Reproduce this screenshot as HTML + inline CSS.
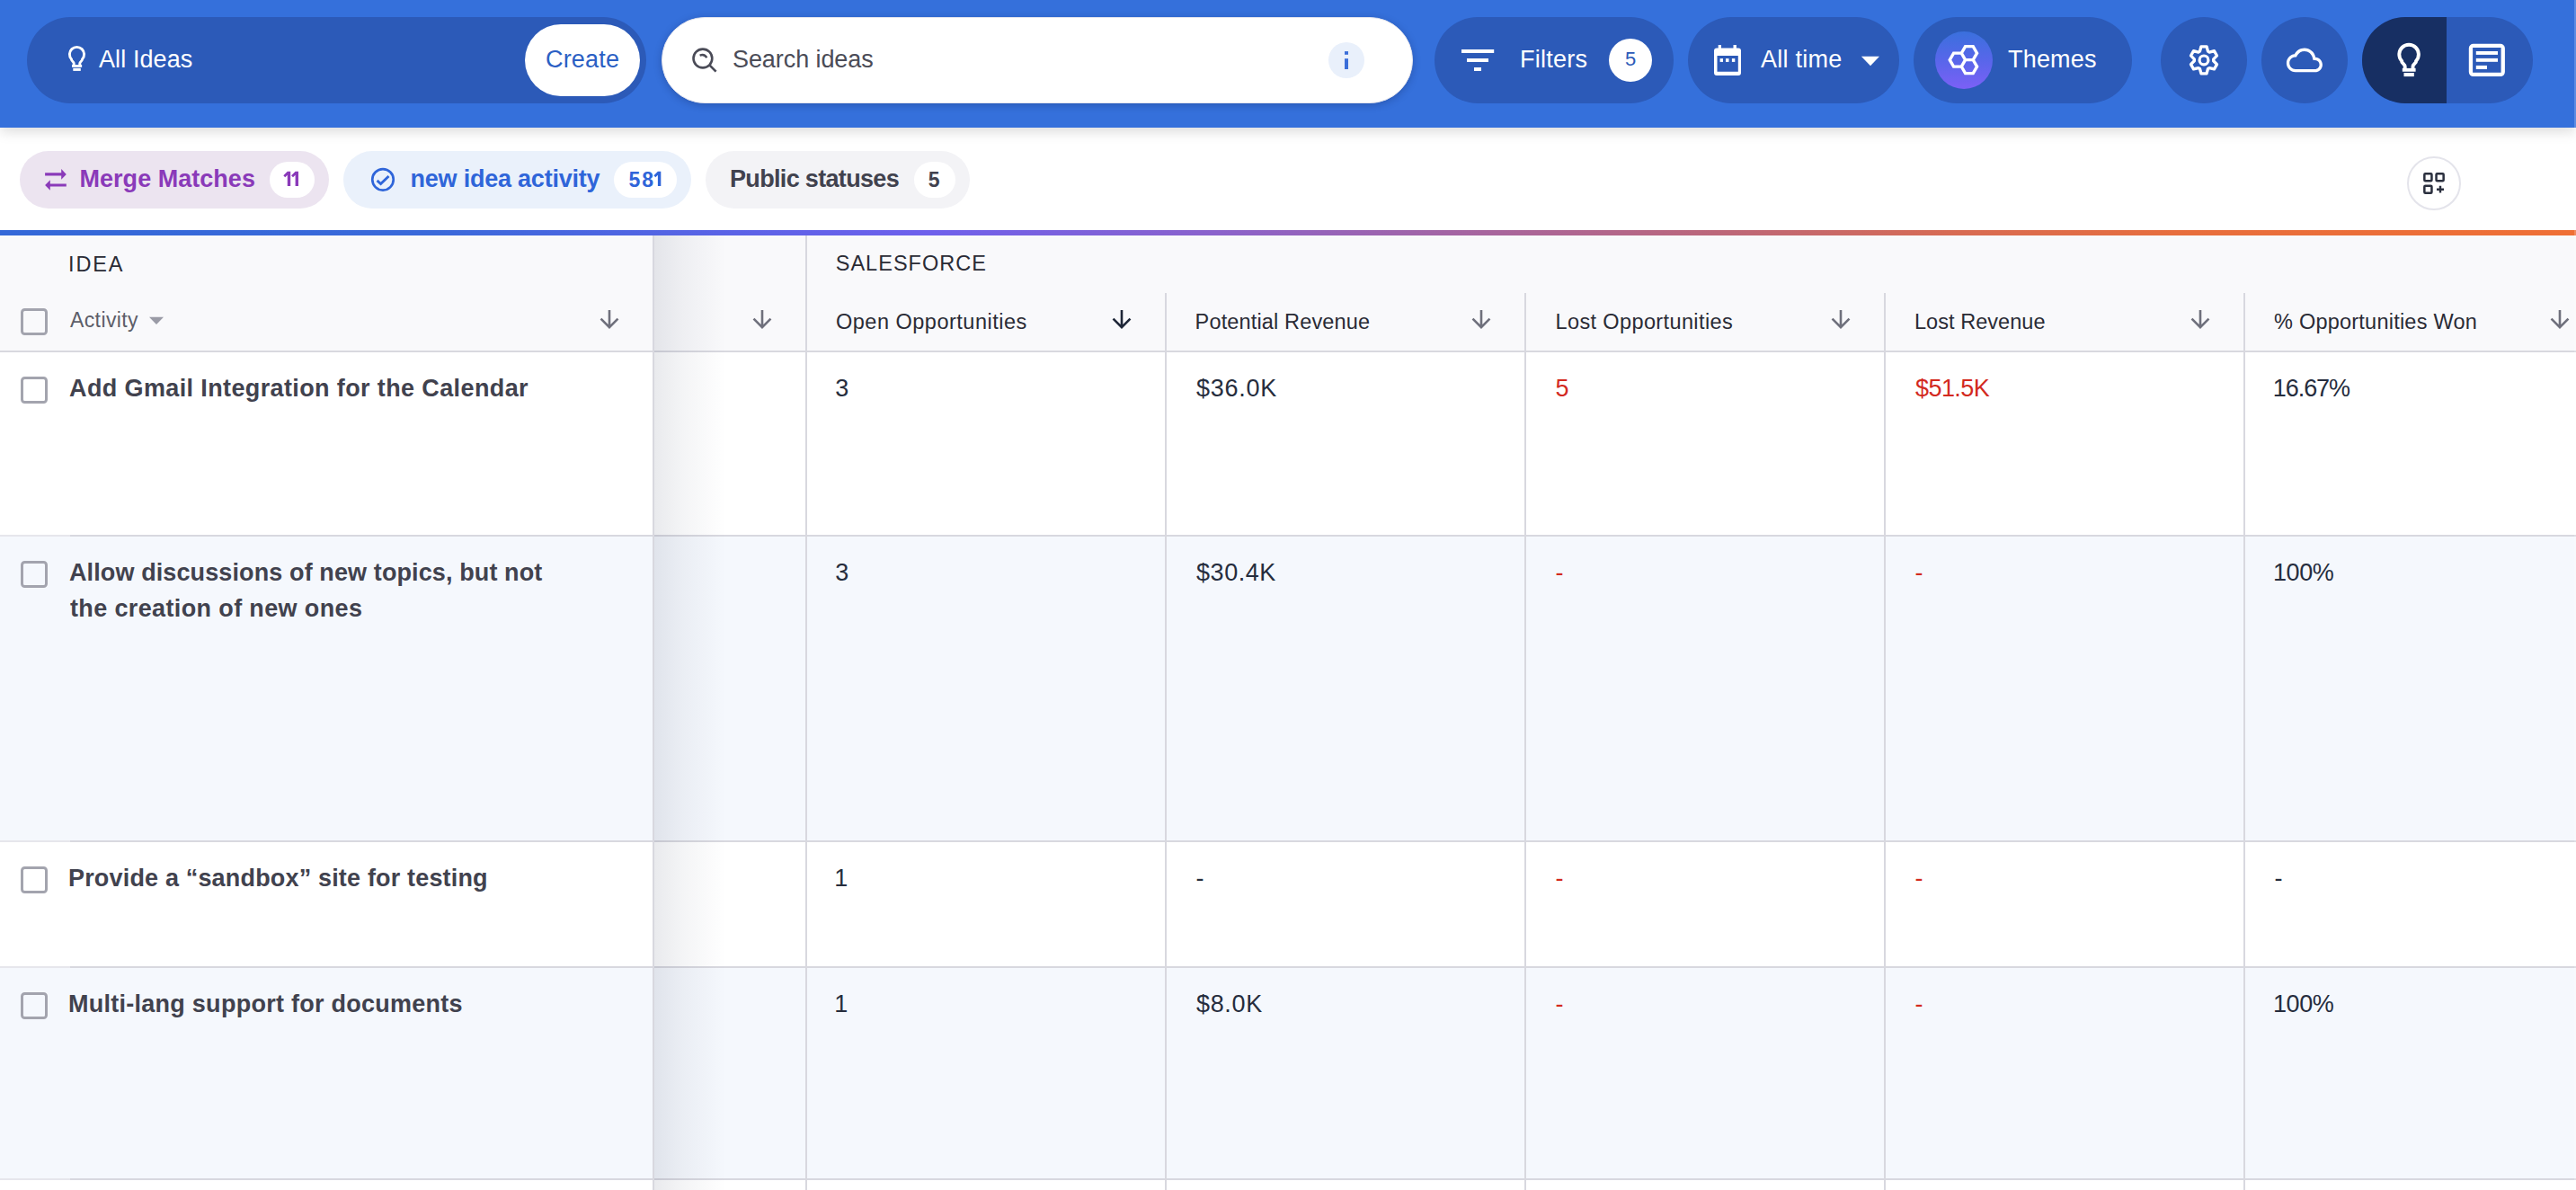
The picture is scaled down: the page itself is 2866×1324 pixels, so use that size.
<!DOCTYPE html>
<html><head><meta charset="utf-8">
<style>
*{box-sizing:border-box;margin:0;padding:0}
html,body{width:2866px;height:1324px;overflow:hidden;background:#fff;font-family:"Liberation Sans",sans-serif}
.a{position:absolute}
.t{position:absolute;white-space:nowrap;line-height:1;z-index:3}
.vl{position:absolute;width:2px;background:#d8d8df}
.cb{position:absolute;left:23px;width:30px;height:30px;border:3px solid #a3a4ae;border-radius:4.5px}
</style></head>
<body>
<div class="a" style="left:0;top:0;width:2866px;height:142px;background:#3570db;box-shadow:0 4px 14px rgba(0,0,0,.15)"></div>
<div class="a" style="left:30px;top:19px;width:689px;height:96px;border-radius:48.0px;background:#2c5ab8;"></div>
<div class="a" style="left:584px;top:27px;width:128px;height:80px;border-radius:40.0px;background:#fff;"></div>
<div class="a" style="left:736px;top:19px;width:836px;height:96px;border-radius:48.0px;background:#fff;box-shadow:0 2px 8px rgba(10,20,60,.25);border:1px solid #e6e6ee"></div>
<div class="a" style="left:1478px;top:47px;width:40px;height:40px;border-radius:20.0px;background:#e9f0fb;"></div>
<div class="a" style="left:1596px;top:19px;width:266px;height:96px;border-radius:48.0px;background:#2c5ab8;"></div>
<div class="a" style="left:1790px;top:43px;width:48px;height:48px;border-radius:24.0px;background:#fff;"></div>
<div class="a" style="left:1878px;top:19px;width:235px;height:96px;border-radius:48.0px;background:#2c5ab8;"></div>
<div class="a" style="left:2129px;top:19px;width:243px;height:96px;border-radius:48.0px;background:#2c5ab8;"></div>
<div class="a" style="left:2153px;top:35px;width:64px;height:64px;border-radius:32.0px;background:linear-gradient(180deg,#3a70dd 0%,#5866ea 50%,#7b60f6 100%);"></div>
<div class="a" style="left:2404px;top:19px;width:96px;height:96px;border-radius:48.0px;background:#2c5ab8;"></div>
<div class="a" style="left:2516px;top:19px;width:96px;height:96px;border-radius:48.0px;background:#2c5ab8;"></div>
<div class="a" style="left:2628px;top:19px;width:190px;height:96px;border-radius:48.0px;background:#2c5ab8;"></div>
<div class="a" style="left:2628px;top:19px;width:94px;height:96px;border-radius:48px 0 0 48px;background:#172f63"></div>
<div class="t" style="left:110px;top:53px;font-size:27px;color:#fff;letter-spacing:0.1px;">All Ideas</div>
<div class="t" style="left:607px;top:53px;font-size:27px;color:#2b5fc4;letter-spacing:0.18px;">Create</div>
<div class="t" style="left:815px;top:53px;font-size:27px;color:#4b4c57;letter-spacing:-0.08px;">Search ideas</div>
<div class="t" style="left:1691px;top:53px;font-size:27px;color:#fff;letter-spacing:0.23px;">Filters</div>
<div class="t" style="left:1959px;top:53px;font-size:27px;color:#fff;letter-spacing:0.25px;">All time</div>
<div class="t" style="left:2234px;top:53px;font-size:27px;color:#fff;letter-spacing:0.2px;">Themes</div>
<div class="t" style="left:1808px;top:55px;font-size:22px;color:#2c5ab8;">5</div>
<div class="a" style="left:22px;top:168px;width:344px;height:64px;border-radius:32px;background:#ece4f0"></div>
<div class="a" style="left:300px;top:180px;width:50px;height:40px;border-radius:20px;background:#fff"></div>
<div class="a" style="left:382px;top:168px;width:387px;height:64px;border-radius:32px;background:#eaf1fb"></div>
<div class="a" style="left:683px;top:180px;width:70px;height:40px;border-radius:20px;background:#fff"></div>
<div class="a" style="left:785px;top:168px;width:294px;height:64px;border-radius:32px;background:#f3f3f6"></div>
<div class="a" style="left:1017px;top:180px;width:46px;height:40px;border-radius:20px;background:#fff"></div>
<div class="t" style="left:88.5px;top:186px;font-size:27px;color:#8a3ab9;font-weight:bold;letter-spacing:0.03px;">Merge Matches</div>
<div class="t" style="left:456.5px;top:186px;font-size:27px;color:#2f65d9;font-weight:bold;letter-spacing:-0.22px;">new idea activity</div>
<div class="t" style="left:812px;top:186px;font-size:27px;color:#41424e;font-weight:bold;letter-spacing:-0.67px;">Public statuses</div>
<div class="t" style="left:699.5px;top:189px;font-size:23px;color:#2f65d9;font-weight:bold;letter-spacing:2.0px;">58</div>
<div class="t" style="left:1032.8px;top:189px;font-size:23px;color:#41424e;font-weight:bold;">5</div>
<div class="a" style="left:2678px;top:174px;width:60px;height:60px;border-radius:30px;border:2px solid #e4e4eb;background:#fff"></div>
<div class="a" style="left:2864px;top:0;width:2px;height:1324px;background:rgba(255,255,255,.2);z-index:20"></div>
<div class="a" style="left:0;top:256px;width:2866px;height:6px;background:linear-gradient(90deg,#3468d8 0%,#3a69da 17%,#5a63e6 28%,#6e60ec 36%,#8a62cc 47%,#a8659c 58%,#bd6778 67%,#d86b52 76%,#e86e3c 85%,#ef6f35 100%)"></div>
<div class="a" style="left:0;top:262px;width:2866px;height:128px;background:#f9f9fb"></div>
<div class="t" style="left:76px;top:283px;font-size:23.5px;color:#2a2b35;letter-spacing:1.87px;">IDEA</div>
<div class="t" style="left:929.7px;top:282px;font-size:23.5px;color:#2a2b35;letter-spacing:1.03px;">SALESFORCE</div>
<div class="t" style="left:78px;top:345px;font-size:23px;color:#5d5e69;letter-spacing:0.39px;">Activity</div>
<div class="t" style="left:930px;top:347px;font-size:23.5px;color:#2a2b35;letter-spacing:0.5px;">Open Opportunities</div>
<div class="t" style="left:1329.6px;top:347px;font-size:23.5px;color:#2a2b35;letter-spacing:0.15px;">Potential Revenue</div>
<div class="t" style="left:1730.5px;top:347px;font-size:23.5px;color:#2a2b35;letter-spacing:0.38px;">Lost Opportunities</div>
<div class="t" style="left:2130px;top:347px;font-size:23.5px;color:#2a2b35;letter-spacing:0.04px;">Lost Revenue</div>
<div class="t" style="left:2530px;top:347px;font-size:23.5px;color:#2a2b35;letter-spacing:0.23px;">% Opportunities Won</div>
<div class="a" style="left:0;top:390px;width:2866px;height:2px;background:#d8d8df"></div>
<div class="a" style="left:0;top:392px;width:2866px;height:203px;background:#fff"></div>
<div class="a" style="left:0;top:595px;width:78px;height:2px;background:#e6e6ec"></div>
<div class="a" style="left:78px;top:595px;width:2788px;height:2px;background:#d8d8df"></div>
<div class="cb" style="top:419.3px"></div>
<div class="t" style="left:77px;top:419px;font-size:27px;color:#41424e;font-weight:bold;letter-spacing:0.378px;">Add Gmail Integration for the Calendar</div>
<div class="t" style="left:929.3px;top:419px;font-size:27px;color:#262d3d;">3</div>
<div class="t" style="left:1331px;top:419px;font-size:27px;color:#262d3d;letter-spacing:0.74px;">$36.0K</div>
<div class="t" style="left:1730.5px;top:419px;font-size:27px;color:#d32a1f;">5</div>
<div class="t" style="left:2131px;top:419px;font-size:27px;color:#d32a1f;letter-spacing:-0.56px;">$51.5K</div>
<div class="t" style="left:2528.8px;top:419px;font-size:27px;color:#262d3d;letter-spacing:-1.06px;">16.67%</div>
<div class="a" style="left:0;top:597px;width:2866px;height:338px;background:#f5f8fd"></div>
<div class="a" style="left:0;top:935px;width:78px;height:2px;background:#e6e6ec"></div>
<div class="a" style="left:78px;top:935px;width:2788px;height:2px;background:#d8d8df"></div>
<div class="cb" style="top:624.3px"></div>
<div class="t" style="left:77px;top:624px;font-size:27px;color:#41424e;font-weight:bold;letter-spacing:0.11px;">Allow discussions of new topics, but not</div>
<div class="t" style="left:78px;top:664px;font-size:27px;color:#41424e;font-weight:bold;letter-spacing:0.365px;">the creation of new ones</div>
<div class="t" style="left:929.3px;top:624px;font-size:27px;color:#262d3d;">3</div>
<div class="t" style="left:1331px;top:624px;font-size:27px;color:#262d3d;letter-spacing:0.56px;">$30.4K</div>
<div class="t" style="left:1730.5px;top:624px;font-size:27px;color:#d32a1f;">-</div>
<div class="t" style="left:2130.5px;top:624px;font-size:27px;color:#d32a1f;">-</div>
<div class="t" style="left:2528.9px;top:624px;font-size:27px;color:#262d3d;letter-spacing:-0.37px;">100%</div>
<div class="a" style="left:0;top:937px;width:2866px;height:138px;background:#fff"></div>
<div class="a" style="left:0;top:1075px;width:78px;height:2px;background:#e6e6ec"></div>
<div class="a" style="left:78px;top:1075px;width:2788px;height:2px;background:#d8d8df"></div>
<div class="cb" style="top:964.3px"></div>
<div class="t" style="left:76px;top:964px;font-size:27px;color:#41424e;font-weight:bold;letter-spacing:0.171px;">Provide a “sandbox” site for testing</div>
<div class="t" style="left:928.2px;top:964px;font-size:27px;color:#262d3d;">1</div>
<div class="t" style="left:1330.5px;top:964px;font-size:27px;color:#262d3d;">-</div>
<div class="t" style="left:1730.5px;top:964px;font-size:27px;color:#d32a1f;">-</div>
<div class="t" style="left:2130.5px;top:964px;font-size:27px;color:#d32a1f;">-</div>
<div class="t" style="left:2530.5px;top:964px;font-size:27px;color:#262d3d;">-</div>
<div class="a" style="left:0;top:1077px;width:2866px;height:234px;background:#f5f8fd"></div>
<div class="a" style="left:0;top:1311px;width:78px;height:2px;background:#e6e6ec"></div>
<div class="a" style="left:78px;top:1311px;width:2788px;height:2px;background:#d8d8df"></div>
<div class="cb" style="top:1104.3px"></div>
<div class="t" style="left:76px;top:1104px;font-size:27px;color:#41424e;font-weight:bold;letter-spacing:0.261px;">Multi-lang support for documents</div>
<div class="t" style="left:928.2px;top:1104px;font-size:27px;color:#262d3d;">1</div>
<div class="t" style="left:1331px;top:1104px;font-size:27px;color:#262d3d;letter-spacing:0.65px;">$8.0K</div>
<div class="t" style="left:1730.5px;top:1104px;font-size:27px;color:#d32a1f;">-</div>
<div class="t" style="left:2130.5px;top:1104px;font-size:27px;color:#d32a1f;">-</div>
<div class="t" style="left:2528.9px;top:1104px;font-size:27px;color:#262d3d;letter-spacing:-0.37px;">100%</div>
<div class="a" style="left:728px;top:262px;width:80px;height:1062px;background:linear-gradient(90deg,rgba(40,50,80,.10) 0%,rgba(40,50,80,.05) 40%,rgba(40,50,80,0) 100%)"></div>
<div class="vl" style="left:726px;top:262px;height:1062px"></div>
<div class="vl" style="left:896px;top:262px;height:1062px"></div>
<div class="vl" style="left:1296px;top:326px;height:998px"></div>
<div class="vl" style="left:1696px;top:326px;height:998px"></div>
<div class="vl" style="left:2096px;top:326px;height:998px"></div>
<div class="vl" style="left:2496px;top:326px;height:998px"></div>
<div class="cb" style="top:343px"></div>
<svg class="a" style="left:0;top:0;z-index:10" width="2866" height="1324" viewBox="0 0 2866 1324"><path d="M82.20,73.12 L82.20,70.50 C82.20,68.62 79.11,67.74 79.48,65.87 A8.10,8.10 0 1 1 91.52,65.87 C91.89,67.74 88.80,68.62 88.80,70.50 L88.80,73.12" fill="none" stroke="#fff" stroke-width="2.92"/><rect x="80.03" y="72.00" width="11.10" height="2.85" fill="#fff"/><rect x="81.30" y="75.83" width="8.48" height="3.07" fill="#fff"/><path d="M2675.70,77.40 L2675.70,73.90 C2675.70,71.40 2671.57,70.23 2672.07,67.73 A10.80,10.80 0 1 1 2688.13,67.73 C2688.63,70.23 2684.50,71.40 2684.50,73.90 L2684.50,77.40" fill="none" stroke="#fff" stroke-width="3.90"/><rect x="2672.80" y="75.90" width="14.80" height="3.80" fill="#fff"/><rect x="2674.50" y="81.00" width="11.30" height="4.10" fill="#fff"/><circle cx="781.9" cy="65" r="10.4" fill="none" stroke="#4a4b57" stroke-width="2.6"/><path d="M778.6,61.6 Q784,59.8 786.3,64.3" fill="none" stroke="#4a4b57" stroke-width="2.4"/><path d="M789.6,72.6 L796.6,79.6" stroke="#4a4b57" stroke-width="2.7"/><rect x="1496" y="57.1" width="4" height="3.7" fill="#3a6ed9"/><rect x="1496" y="65.2" width="4" height="11.8" fill="#3a6ed9"/><rect x="1626" y="55" width="36.2" height="4" fill="#fff"/><rect x="1632" y="65" width="24" height="4" fill="#fff"/><rect x="1640" y="75" width="8" height="4" fill="#fff"/><path fill="#fff" fill-rule="evenodd" d="M1911.7,49.9h3.3v3.7h13.5v-3.7h3.4v3.7h2.1a3,3 0 0 1 3,3v24.5a3,3 0 0 1 -3,3h-24a3,3 0 0 1 -3,-3v-24.5a3,3 0 0 1 3,-3h1.7z M1910.5,62.1v17.6h23.3v-17.6z"/><rect x="1913.6" y="65.1" width="3.4" height="3.8" fill="#fff"/><rect x="1920" y="65.1" width="3.5" height="3.8" fill="#fff"/><rect x="1926.9" y="65.1" width="3.4" height="3.8" fill="#fff"/><path d="M2070.9,62.7 L2091,62.7 L2081,73.2Z" fill="#fff"/><path d="M2199.55,59.14 L2195.22,66.63 L2186.58,66.63 L2182.25,59.14 L2186.58,51.65 L2195.22,51.65Z M2186.55,66.63 L2182.22,74.12 L2173.58,74.12 L2169.25,66.63 L2173.58,59.14 L2182.22,59.14Z M2199.55,74.12 L2195.22,81.61 L2186.58,81.61 L2182.25,74.12 L2186.58,66.63 L2195.22,66.63Z" fill="none" stroke="#fff" stroke-width="3.4" stroke-linejoin="miter"/><path d="M2447.48,57.10 L2448.95,51.81 L2455.05,51.81 L2456.52,57.10 L2458.14,58.04 L2463.46,56.66 L2466.51,61.95 L2462.66,65.87 L2462.66,67.73 L2466.51,71.65 L2463.46,76.94 L2458.14,75.56 L2456.52,76.50 L2455.05,81.79 L2448.95,81.79 L2447.48,76.50 L2445.86,75.56 L2440.54,76.94 L2437.49,71.65 L2441.34,67.73 L2441.34,65.87 L2437.49,61.95 L2440.54,56.66 L2445.86,58.04Z" fill="none" stroke="#fff" stroke-width="3.3" stroke-linejoin="round"/><circle cx="2452" cy="66.9" r="4.9" fill="none" stroke="#fff" stroke-width="3.2"/><g transform="translate(2543.9,46.9) scale(1.667)"><path fill="#fff" d="M19.35 10.04C18.67 6.59 15.64 4 12 4 9.11 4 6.6 5.64 5.35 8.04 2.34 8.36 0 10.91 0 14c0 3.31 2.69 6 6 6h13c2.76 0 5-2.24 5-5 0-2.64-2.05-4.78-4.65-4.96zM19 18H6c-2.21 0-4-1.79-4-4 0-2.05 1.53-3.76 3.56-3.97l1.07-.11.5-.95C8.08 7.14 9.94 6 12 6c2.62 0 4.88 1.86 5.39 4.43l.3 1.5 1.53.11c1.56.1 2.78 1.41 2.78 2.96 0 1.65-1.35 3-3 3z"/></g><path fill="#fff" fill-rule="evenodd" d="M2751.8,48.7h30.1a5,5 0 0 1 5,5v26.4a5,5 0 0 1 -5,5h-30.1a5,5 0 0 1 -5,-5v-26.4a5,5 0 0 1 5,-5z M2751.1,53v27.8h31.5v-27.8z"/><rect x="2754.8" y="57" width="24.2" height="3.9" fill="#fff"/><rect x="2754.8" y="64.9" width="24.2" height="3.9" fill="#fff"/><rect x="2754.8" y="72.9" width="12.2" height="4.1" fill="#fff"/><path fill="#8a3ab9" d="M319.8,190.7h3.4v16.3h-3.4v-12.2l-2.6,2.5l-1.9,-2z M328.6,190.7h3.4v16.3h-3.4v-12.2l-2.6,2.5l-1.9,-2z"/><path fill="#2f65d9" d="M731.9,190.7h3.4v16.3h-3.4v-12.2l-2.6,2.5l-1.9,-2z"/><path d="M50.1,192.3h18.1v3.2h-18.1z M68.2,188.1 L73.8,194 L68.2,199.8Z" fill="#8a3ab9"/><path d="M55.8,204.4h18v3.2h-18z M55.8,200.2 L50.1,206 L55.8,211.8Z" fill="#8a3ab9"/><circle cx="426" cy="199.8" r="11.75" fill="none" stroke="#2f65d9" stroke-width="2.7"/><path d="M419.6,200.9 L423.6,204.6 L432.5,195.9" fill="none" stroke="#2f65d9" stroke-width="2.8"/><rect x="2697.35" y="193.15" width="8.1" height="8.1" rx="1" fill="none" stroke="#2a2f3e" stroke-width="2.5"/><rect x="2710.55" y="193.15" width="8.1" height="8.1" rx="1" fill="none" stroke="#2a2f3e" stroke-width="2.5"/><rect x="2697.35" y="206.65" width="8.1" height="8.1" rx="1" fill="none" stroke="#2a2f3e" stroke-width="2.5"/><path d="M2711,210.7h8 M2715,206.8v7.8" stroke="#2a2f3e" stroke-width="2.4"/><g transform="translate(662.40,339.9) scale(1.3)"><path fill="#6f707c" d="M20 12l-1.41-1.41L13 16.17V4h-2v12.17l-5.58-5.59L4 12l8 8 8-8z"/></g><g transform="translate(832.40,339.9) scale(1.3)"><path fill="#6f707c" d="M20 12l-1.41-1.41L13 16.17V4h-2v12.17l-5.58-5.59L4 12l8 8 8-8z"/></g><g transform="translate(1632.40,339.9) scale(1.3)"><path fill="#6f707c" d="M20 12l-1.41-1.41L13 16.17V4h-2v12.17l-5.58-5.59L4 12l8 8 8-8z"/></g><g transform="translate(2032.40,339.9) scale(1.3)"><path fill="#6f707c" d="M20 12l-1.41-1.41L13 16.17V4h-2v12.17l-5.58-5.59L4 12l8 8 8-8z"/></g><g transform="translate(2432.40,339.9) scale(1.3)"><path fill="#6f707c" d="M20 12l-1.41-1.41L13 16.17V4h-2v12.17l-5.58-5.59L4 12l8 8 8-8z"/></g><g transform="translate(2832.40,339.9) scale(1.3)"><path fill="#6f707c" d="M20 12l-1.41-1.41L13 16.17V4h-2v12.17l-5.58-5.59L4 12l8 8 8-8z"/></g><g transform="translate(1232.40,339.9) scale(1.3)"><path fill="#1f2738" d="M20 12l-1.41-1.41L13 16.17V4h-2v12.17l-5.58-5.59L4 12l8 8 8-8z"/></g><path d="M166,352.8 L182,352.8 L174,360.9Z" fill="#9a9ba6"/></svg>
</body></html>
